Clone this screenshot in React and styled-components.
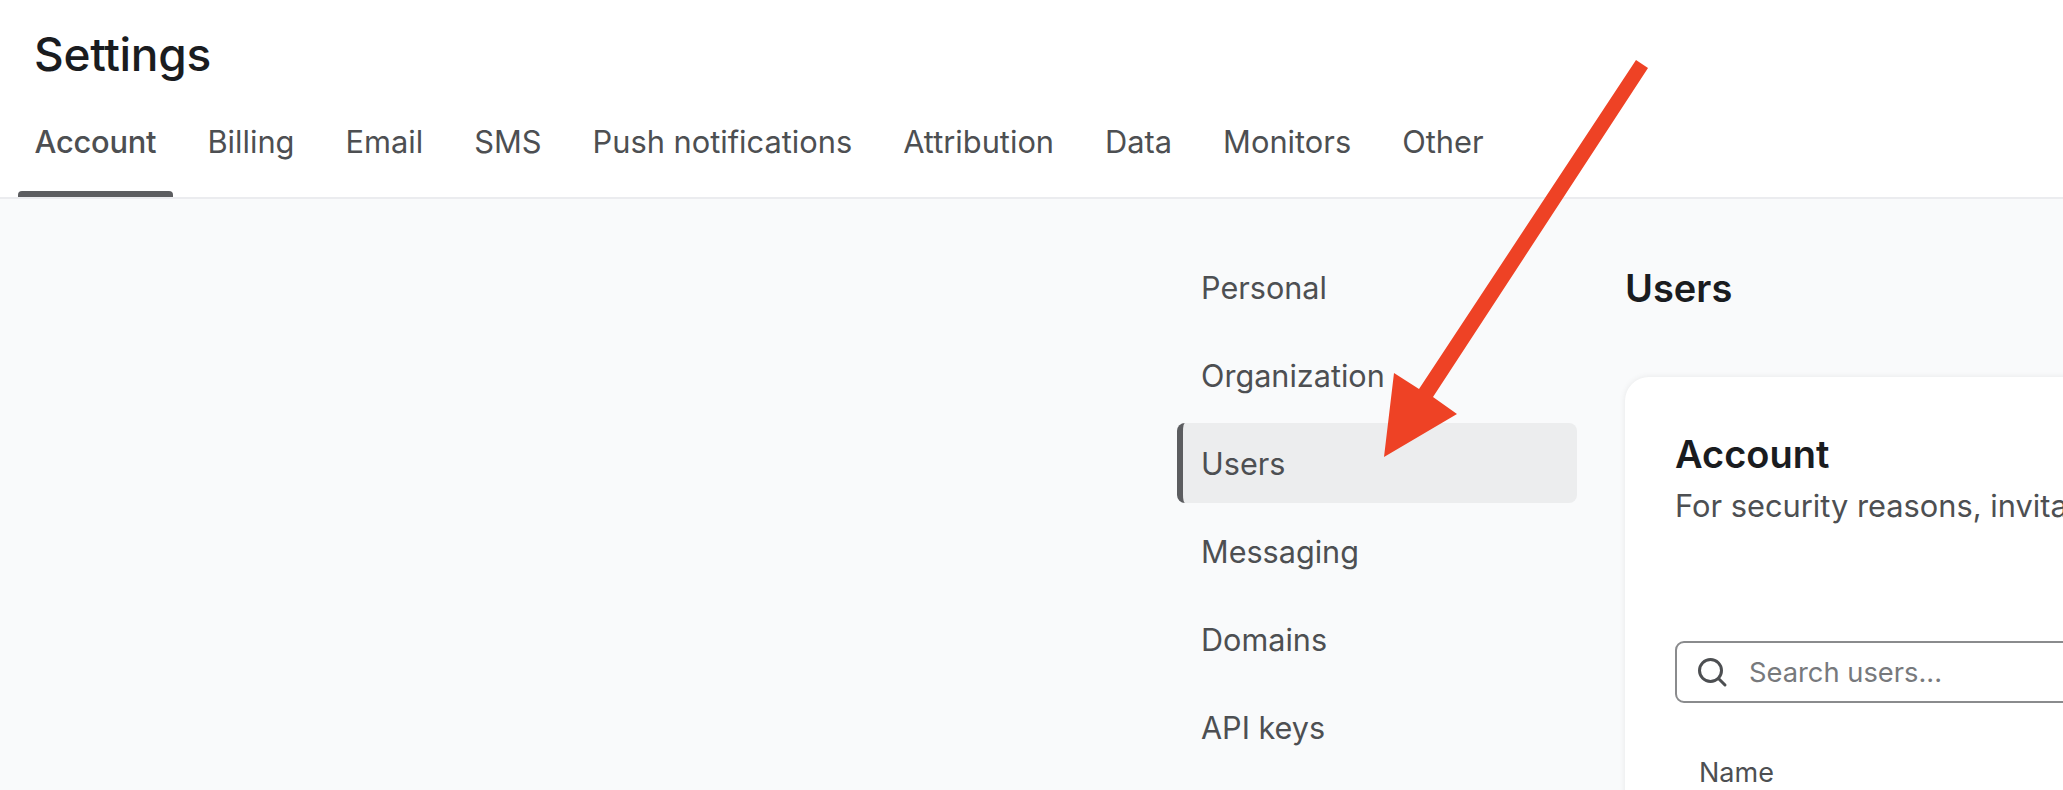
import styled, { createGlobalStyle } from "styled-components";

const Global = createGlobalStyle`
  html, body {
    margin: 0;
    height: 100%;
    overflow: hidden;
    background: #f9fafb;
    font-family: Inter, "Liberation Sans", sans-serif;
  }
`

const Page = styled.div`
  position: relative;
  width: 2063px;
  height: 790px;
  overflow: hidden;
`

const Header = styled.header`
  background: #fff;
  border-bottom: 2px solid #ebecef;
  box-sizing: border-box;
  height: 199px;
  padding: 27px 0 0 18px;
  display: flex;
  flex-direction: column;
`

const Title = styled.h1`
  margin: 0 0 0 16px;
  font-size: 46px;
  line-height: 54px;
  font-weight: 500;
  color: #1a1c1f;
  letter-spacing: -0.3px;
`

const Tabs = styled.nav`
  display: flex;
  gap: 18px;
  margin-top: 41px;
`

const Tab = styled.a`
  position: relative;
  padding: 0 16.5px;
  height: 75px;
  box-sizing: border-box;
  font-size: 30.8px;
  line-height: 40px;
  color: #4d4f52;
  font-weight: ${p => (p.$active ? 500 : 400)};
  letter-spacing: ${p => (p.$active ? "-0.2px" : "0")};
  white-space: nowrap;
  ${p => p.$active && `
    &::after {
      content: "";
      position: absolute;
      left: 0;
      right: 0;
      bottom: 0;
      height: 6px;
      background: #5c5d60;
      border-radius: 4px 4px 0 0;
    }
  `}
`

const Body = styled.div`
  display: flex;
  padding: 48px 0 0 1177px;
  gap: 48px;
`

const Side = styled.ul`
  list-style: none;
  margin: 0;
  padding: 0;
  width: 400px;
  flex: none;
  display: flex;
  flex-direction: column;
  gap: 8px;
`

const SideItem = styled.li`
  height: 80px;
  box-sizing: border-box;
  display: flex;
  align-items: center;
  padding-left: 24px;
  font-size: 30.6px;
  color: #4d4f52;
  border-radius: 8px;
  ${p => p.$active && `
    padding-left: 18px;
    background: #ecedee;
    border-left: 6px solid #5c5d60;
  `}
`

const Content = styled.main`
  width: 1000px;
  flex: none;
`

const Heading = styled.h2`
  margin: 17px 0 0;
  font-size: 38px;
  line-height: 48px;
  font-weight: 600;
  color: #1a1c1f;
`

const Card = styled.section`
  margin-top: 65px;
  background: #fff;
  border-radius: 24px;
  box-shadow: 0 0 6px rgba(20, 24, 30, 0.08);
  padding: 53px 50px 50px;
  height: 600px;
`

const CardTitle = styled.h3`
  margin: 0;
  font-size: 38px;
  line-height: 48px;
  font-weight: 600;
  color: #1a1c1f;
`

const CardText = styled.p`
  margin: 7px 0 0;
  font-size: 30.8px;
  line-height: 42px;
  color: #4d4f52;
  white-space: nowrap;
`

const Search = styled.div`
  margin-top: 114px;
  height: 62px;
  box-sizing: border-box;
  border: 2px solid #8a8b8d;
  border-radius: 9px;
  display: flex;
  align-items: center;
  gap: 21px;
  padding-left: 19px;
  color: #4d4f52;
`

const Placeholder = styled.span`
  font-size: 27.3px;
  color: #77797c;
`

const Column = styled.div`
  margin-top: 53px;
  padding-left: 24px;
  font-size: 27px;
  line-height: 34px;
  color: #4d4f52;
`

const Arrow = styled.svg`
  position: absolute;
  left: 0;
  top: 0;
  pointer-events: none;
`

const tabs = ["Account", "Billing", "Email", "SMS", "Push notifications", "Attribution", "Data", "Monitors", "Other"]
const items = ["Personal", "Organization", "Users", "Messaging", "Domains", "API keys"]

function App() {
  return (
    <Page>
      <Global />
      <Header>
        <Title>Settings</Title>
        <Tabs>
          {tabs.map(t => <Tab key={t} $active={t === "Account"}>{t}</Tab>)}
        </Tabs>
      </Header>
      <Body>
        <Side>
          {items.map(i => <SideItem key={i} $active={i === "Users"}>{i}</SideItem>)}
        </Side>
        <Content>
          <Heading>Users</Heading>
          <Card>
            <CardTitle>Account</CardTitle>
            <CardText>For security reasons, invita</CardText>
            <Search>
              <svg width="32" height="32" viewBox="0 0 32 32" fill="none" stroke="currentColor" strokeWidth="3" strokeLinecap="round">
                <circle cx="14.5" cy="14.5" r="11" />
                <path d="M22.5 22.5 L29 29" />
              </svg>
              <Placeholder>Search users...</Placeholder>
            </Search>
            <Column>Name</Column>
          </Card>
        </Content>
      </Body>
      <Arrow width="2063" height="790" viewBox="0 0 2063 790">
        <polygon fill="#ee4225" points="1636,60 1648,68 1433,397 1457,414 1384,457 1394,373 1419,389" />
      </Arrow>
    </Page>
  )
}

export default App;
